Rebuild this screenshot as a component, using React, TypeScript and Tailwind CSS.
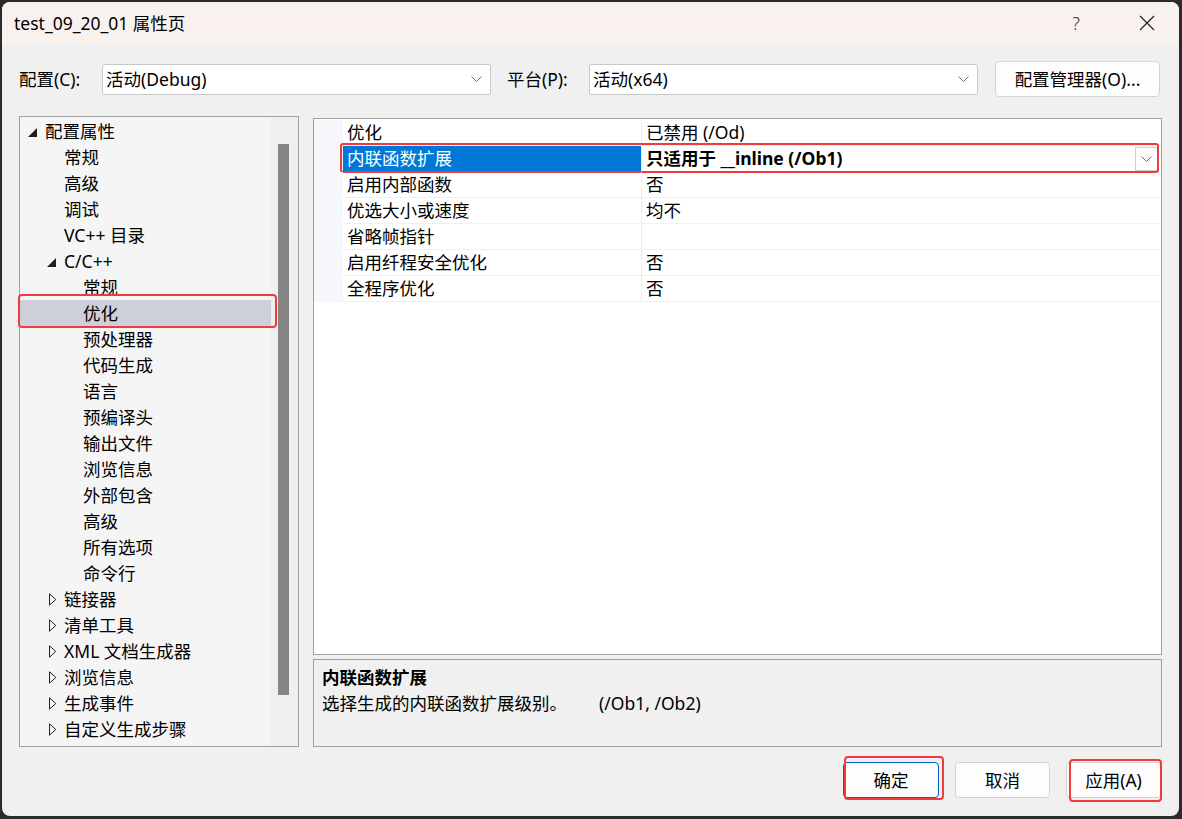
import React from "react";

const font = "font-['Noto_Sans','Noto_Sans_CJK_SC',sans-serif]";

type TreeItem = { label: string; level: number; arrow?: "open" | "closed"; selected?: boolean };

const tree: TreeItem[] = [
  { label: "配置属性", level: 0, arrow: "open" },
  { label: "常规", level: 1 },
  { label: "高级", level: 1 },
  { label: "调试", level: 1 },
  { label: "VC++ 目录", level: 1 },
  { label: "C/C++", level: 1, arrow: "open" },
  { label: "常规", level: 2 },
  { label: "优化", level: 2, selected: true },
  { label: "预处理器", level: 2 },
  { label: "代码生成", level: 2 },
  { label: "语言", level: 2 },
  { label: "预编译头", level: 2 },
  { label: "输出文件", level: 2 },
  { label: "浏览信息", level: 2 },
  { label: "外部包含", level: 2 },
  { label: "高级", level: 2 },
  { label: "所有选项", level: 2 },
  { label: "命令行", level: 2 },
  { label: "链接器", level: 1, arrow: "closed" },
  { label: "清单工具", level: 1, arrow: "closed" },
  { label: "XML 文档生成器", level: 1, arrow: "closed" },
  { label: "浏览信息", level: 1, arrow: "closed" },
  { label: "生成事件", level: 1, arrow: "closed" },
  { label: "自定义生成步骤", level: 1, arrow: "closed" },
];

const props = [
  { name: "优化", value: "已禁用 (/Od)" },
  { name: "内联函数扩展", value: "只适用于 __inline (/Ob1)", selected: true },
  { name: "启用内部函数", value: "否" },
  { name: "优选大小或速度", value: "均不" },
  { name: "省略帧指针", value: "" },
  { name: "启用纤程安全优化", value: "否" },
  { name: "全程序优化", value: "否" },
];

const Chevron = () => (
  <svg width="11" height="6" viewBox="0 0 11 6" fill="none">
    <path d="M0.5 0.5 L5.5 5.5 L10.5 0.5" stroke="#6b6b6b" strokeWidth="1" />
  </svg>
);

const Arrow = ({ kind }: { kind?: "open" | "closed" }) => {
  if (kind === "open")
    return (
      <svg width="9" height="9" viewBox="0 0 9 9" className="mt-[2px]">
        <path d="M9 0 L9 9 L0 9 Z" fill="#1e1e1e" />
      </svg>
    );
  if (kind === "closed")
    return (
      <svg width="8" height="13" viewBox="0 0 8 13" className="ml-[2px] mt-[1px]">
        <path d="M0.5 0.8 L6.8 6.5 L0.5 12.2 Z" fill="none" stroke="#1e1e1e" strokeWidth="1" />
      </svg>
    );
  return null;
};

const Combo = ({ text }: { text: string }) => (
  <div className="flex h-[31px] w-[389px] items-center justify-between rounded-[2px] border border-[#c8c8c8] bg-white pl-[3px] pr-[8px]">
    <span>{text}</span>
    <Chevron />
  </div>
);

export default function App() {
  return (
    <div className={`h-[819px] w-[1182px] overflow-hidden bg-[#2b2b2b] pl-[2px] pt-[2px] text-[17.5px] text-black ${font}`}>
      <div className="flex h-[814px] w-[1177px] flex-col overflow-hidden rounded-[8px] bg-[#f0f0f0]">
        {/* title bar */}
        <div className="flex h-[42px] flex-none items-center bg-[#f9f1ee] pl-[12px]">
          <span className="leading-[20px]">test_09_20_01 属性页</span>
          <span className="ml-auto mr-[59px] text-[18px] font-light text-[#333]">?</span>
          <svg width="16" height="16" viewBox="0 0 16 16" className="mr-[24px]">
            <path d="M1 1 L15 15 M15 1 L1 15" stroke="#222" strokeWidth="1.2" />
          </svg>
        </div>

        {/* config row */}
        <div className="flex h-[36px] flex-none items-center pl-[17px] mt-[17px]">
          <span className="w-[83px]">配置(C):</span>
          <Combo text="活动(Debug)" />
          <span className="ml-[16px] w-[82px]">平台(P):</span>
          <Combo text="活动(x64)" />
          <div className="ml-[17px] flex h-[36px] w-[165px] items-center justify-center rounded-[4px] border border-[#d3d3d3] bg-[#fdfdfd]">
            配置管理器(O)...
          </div>
        </div>

        {/* main area */}
        <div className="mt-[19px] flex h-[631px] flex-none pl-[17px]">
          {/* tree */}
          <div className="flex h-[631px] w-[280px] flex-none border border-[#a0a0a0] bg-[#f5f5f5]">
            <div className="w-[251px] pt-[1px]">
              {tree.map((t, i) => (
                <div
                  key={i}
                  className={`relative flex h-[26px] items-center ${t.selected ? "bg-[#cdd0db]" : ""}`}
                  style={{ paddingLeft: 8 + t.level * 19 }}
                >
                  <div className="flex w-[17px] flex-none items-center">
                    <Arrow kind={t.arrow} />
                  </div>
                  <span className="whitespace-nowrap leading-[26px]">{t.label}</span>
                  {t.selected && (
                    <div className="absolute -bottom-[2px] -left-[2px] -right-[6px] -top-[6px] rounded-[4px] border-2 border-[#ef3b3b]" />
                  )}
                </div>
              ))}
            </div>
            <div className="flex-1 bg-[#efefef] pl-[7px] pt-[27px]">
              <div className="h-[551px] w-[11px] bg-[#858585]" />
            </div>
          </div>

          {/* right column */}
          <div className="ml-[14px] flex w-[849px] flex-none flex-col">
            <div className="mt-[2px] h-[537px] border border-[#a0a0a0] bg-white pt-[1px]">
              {props.map((p, i) => (
                <div key={i} className="relative flex h-[26px]">
                  <div className="w-[29px] flex-none bg-[#f5f7fb]" />
                  <div
                    className={`flex w-[298px] flex-none items-center border-b pl-[4px] ${
                      p.selected ? "border-[#0078d7] bg-[#0078d7] text-white" : "border-[#f0f0f0]"
                    }`}
                  >
                    {p.name}
                  </div>
                  <div className="w-[1px] flex-none bg-[#ececec]" />
                  <div className={`flex flex-1 items-center border-b pl-[4px] pr-[3px] ${p.selected ? "border-white font-bold" : "border-[#f0f0f0]"}`}>
                    <span className="whitespace-nowrap">{p.value}</span>
                    {p.selected && (
                      <div className="ml-auto flex h-[24px] w-[23px] items-center justify-center border border-[#cfcfcf] bg-white">
                        <Chevron />
                      </div>
                    )}
                  </div>
                  {p.selected && (
                    <div className="absolute -bottom-[1px] left-[26px] right-[2px] -top-[3px] rounded-[3px] border-2 border-[#ef3b3b]" />
                  )}
                </div>
              ))}
            </div>
            <div className="mt-[4px] h-[88px] border border-[#a0a0a0] bg-[#f0f0f0] pl-[8px] pt-[4px]">
              <div className="font-bold leading-[26px]">内联函数扩展</div>
              <div className="whitespace-nowrap leading-[26px]">
                <span>选择生成的内联函数扩展级别。</span>
                <span className="ml-[32px]">(/Ob1, /Ob2)</span>
              </div>
            </div>
          </div>
        </div>

        {/* bottom buttons */}
        <div className="mt-[15px] flex h-[36px] flex-none justify-end gap-[16px] pr-[18px]">
          <div className="relative flex h-[36px] w-[96px] items-center justify-center rounded-[4px] border border-[#0067c0] bg-[#fdfdfd]">
            确定
            <div className="absolute -bottom-[3px] left-[0px] -right-[6px] -top-[7px] rounded-[4px] border-2 border-[#ef3b3b]" />
          </div>
          <div className="flex h-[36px] w-[95px] items-center justify-center rounded-[4px] border border-[#d3d3d3] bg-[#fdfdfd]">
            取消
          </div>
          <div className="relative flex h-[36px] w-[95px] items-center justify-center rounded-[4px] border border-[#d3d3d3] bg-[#fdfdfd]">
            应用(A)
            <div className="absolute -bottom-[5px] left-[2px] -right-[2px] -top-[4px] rounded-[4px] border-2 border-[#ef3b3b]" />
          </div>
        </div>
      </div>
    </div>
  );
}
